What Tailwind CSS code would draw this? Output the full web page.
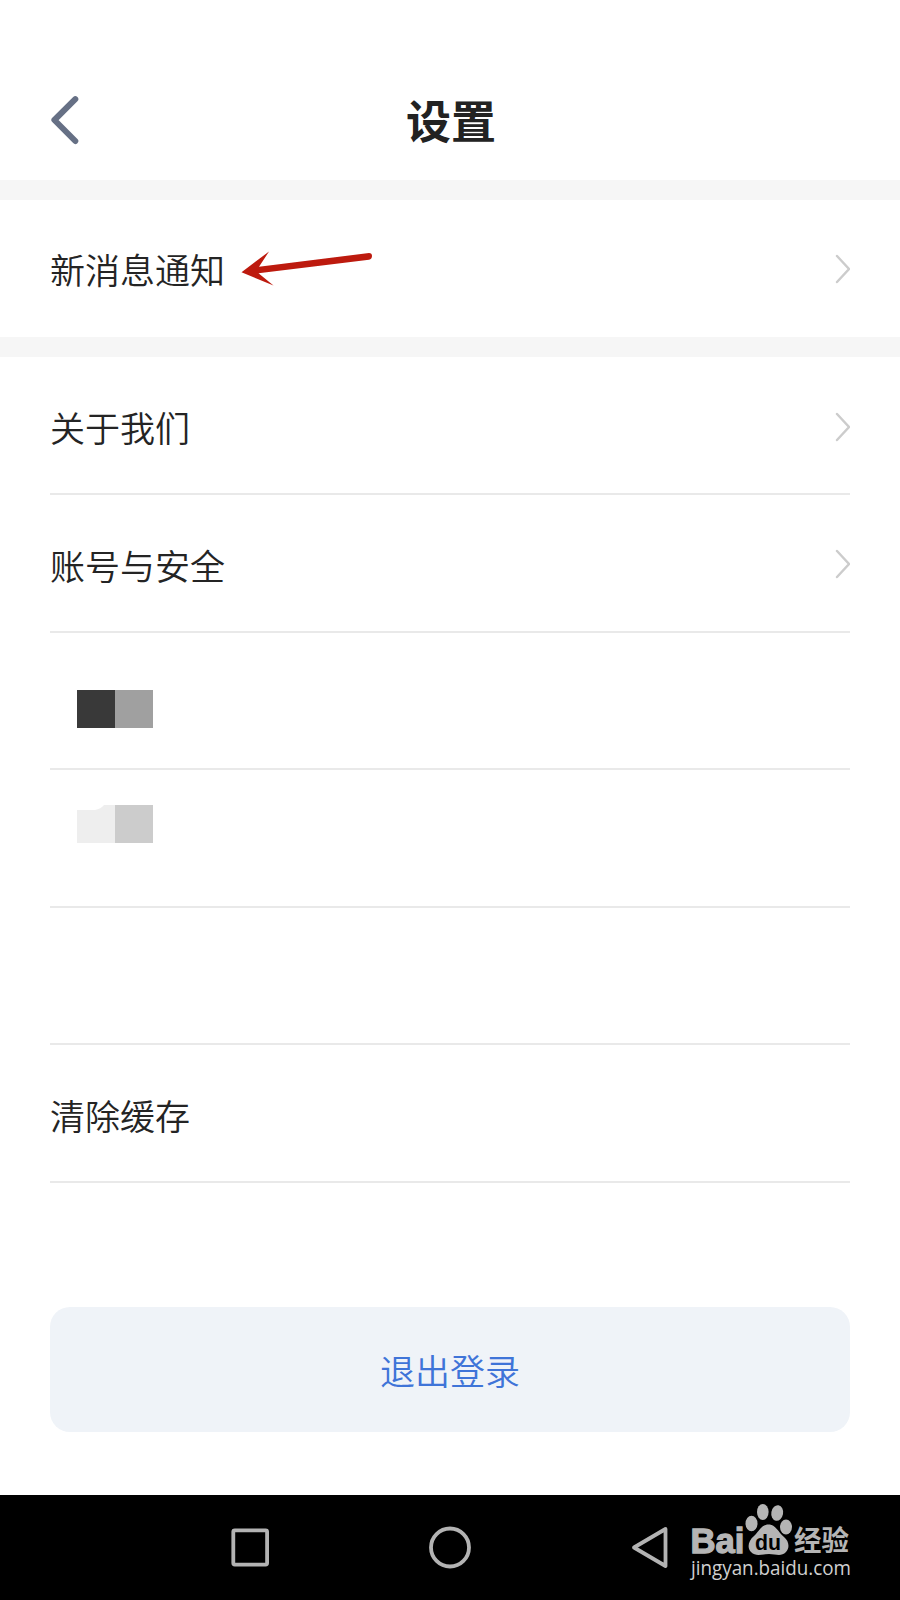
<!DOCTYPE html>
<html lang="zh-CN">

<head>
    <meta charset="UTF-8">
    <meta name="viewport" content="width=device-width, initial-scale=1.0">
    <title>设置</title>
    <script src="https://cdn.jsdelivr.net/npm/@tailwindcss/browser@4"></script>
</head>

<body class="bg-white">
    <div class="relative flex flex-col w-[900px] h-[1600px] overflow-hidden text-[#242424] text-[35px] leading-none font-[350] font-['Noto_Sans_CJK_SC',sans-serif]">
        <header class="grid grid-cols-3 items-center h-[180px] pt-[60px] px-[50px]">
            <svg class="w-[30px] h-[50px]" viewBox="0 0 30 50" fill="none" stroke="#667085" stroke-width="6" stroke-linecap="round" stroke-linejoin="round">
                <path d="M25.3 4.2L4.4 25L25.3 46" />
            </svg>
            <h1 class="pl-0.5 pb-0.5 text-center text-[45px] font-bold text-[#222]">设置</h1>
        </header>

        <div class="h-5 bg-[#f6f6f6]"></div>

        <!-- Notifications -->
        <a class="flex items-center justify-between h-[137px] px-[50px]">
            <span class="flex items-center">
                新消息通知
                <svg class="w-[136px] h-[38px] ml-[14px]" viewBox="239 250 136 38" fill="#bd1a0e">
                    <path d="M241.5 272.3L269 251.5L259 266.8L369 253Q372 253 372 256Q372 259 369 259.8L258.5 273.2L273.5 285.5Z" />
                </svg>
            </span>
            <svg class="w-4 h-[30px]" viewBox="0 0 16 30" fill="none" stroke="#ccc" stroke-width="2.4" stroke-linecap="round">
                <path d="M3 2L15 15L3 28" />
            </svg>
        </a>

        <div class="h-5 bg-[#f6f6f6]"></div>

        <!-- General -->
        <ul class="pt-[0.5px] px-[50px]">
            <li class="flex items-center justify-between h-[137.5px] pt-[3px] border-b-2 border-[#e9e9e9]">
                关于我们
                <svg class="w-4 h-[30px]" viewBox="0 0 16 30" fill="none" stroke="#ccc" stroke-width="2.4" stroke-linecap="round">
                    <path d="M3 2L15 15L3 28" />
                </svg>
            </li>
            <li class="flex items-center justify-between h-[137.5px] pt-[3px] border-b-2 border-[#e9e9e9]">
                账号与安全
                <svg class="w-4 h-[30px]" viewBox="0 0 16 30" fill="none" stroke="#ccc" stroke-width="2.4" stroke-linecap="round">
                    <path d="M3 2L15 15L3 28" />
                </svg>
            </li>
            <li class="flex items-start h-[137.5px] pt-[57.5px] pl-[27px] border-b-2 border-[#e9e9e9]">
                <span class="w-[38px] h-[38px] bg-[#393939]"></span>
                <span class="w-[38px] h-[38px] bg-[#a0a0a0]"></span>
            </li>
            <li class="flex items-start h-[137.5px] pt-[35px] pl-[27px] border-b-2 border-[#e9e9e9]">
                <svg class="w-[38px] h-[38px]" viewBox="0 0 38 38" fill="#eee">
                    <path d="M0 5H18Q24 4 27 0H38V38H0Z" />
                </svg>
                <span class="w-[38px] h-[38px] bg-[#ccc]"></span>
            </li>
            <li class="h-[137.5px] border-b-2 border-[#e9e9e9]"></li>
            <li class="flex items-center h-[137.5px] pt-[3px] border-b-2 border-[#e9e9e9]">清除缓存</li>
        </ul>

        <button class="flex items-center justify-center h-[125px] mt-[124.5px] mx-[50px] rounded-[20px] bg-[#eff3f8] text-[#3f74d8]">退出登录</button>

        <!-- System navigation -->
        <nav class="relative h-[105px] mt-auto bg-black">
            <svg class="w-[900px] h-[105px]" viewBox="0 1495 900 105" fill="none" stroke="#b3b3b3" stroke-width="3.8" stroke-linejoin="round">
                <rect x="233.3" y="1530.3" width="33.8" height="34.3" rx="1.5" />
                <circle cx="450" cy="1547.5" r="19" />
                <path d="M665.5 1529L634 1547.5L665.5 1566Z" />
            </svg>
            <!-- Watermark -->
            <svg class="absolute left-[680px] top-0 w-[180px] h-[105px]" viewBox="680 1495 180 105" fill="#b5b5b5">
                <text x="690.5" y="1552.5" textLength="54" lengthAdjust="spacingAndGlyphs" stroke="#b5b5b5" stroke-width="1.3" class="font-['Liberation_Sans'] font-bold text-[35px]">Bai</text>
                <ellipse cx="751.5" cy="1523.5" rx="6" ry="7.8" />
                <ellipse cx="762.8" cy="1512" rx="5.8" ry="8" />
                <ellipse cx="777.2" cy="1513" rx="5.9" ry="7.8" transform="rotate(10 777.2 1513)" />
                <ellipse cx="786" cy="1527" rx="6" ry="7.5" />
                <path d="M768.5 1524.5C761 1524.5 759 1532 754 1536C748 1541 747 1548 751 1552C756 1557 762 1554 769 1554C776 1554 781 1557 786 1552C790 1548 789 1541 784 1537C778 1532 776 1524.5 768.5 1524.5Z" />
                <text x="755" y="1550" textLength="26" lengthAdjust="spacingAndGlyphs" fill="#000" class="font-['Liberation_Sans'] font-bold text-[22px]">du</text>
                <text x="794" y="1551" textLength="55" lengthAdjust="spacingAndGlyphs" class="font-['Noto_Sans_CJK_SC',sans-serif] font-bold text-[28px]">经验</text>
                <text x="691" y="1575" textLength="160" lengthAdjust="spacingAndGlyphs" fill="#d0d0d0" class="font-['Open_Sans'] font-medium text-[20px]">jingyan.baidu.com</text>
            </svg>
        </nav>
    </div>
</body>

</html>
